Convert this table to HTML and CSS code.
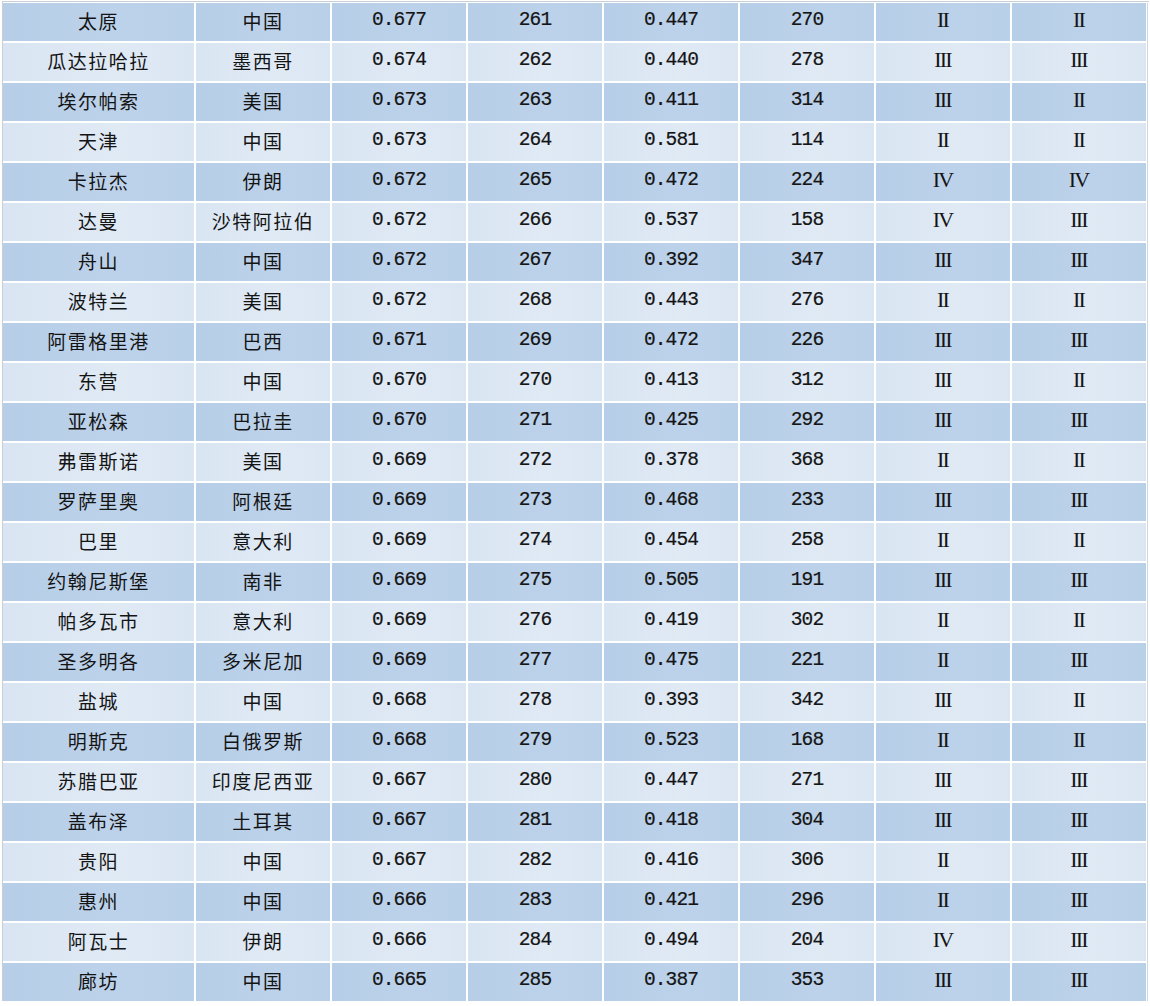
FILE: index.html
```html
<!DOCTYPE html>
<html lang="zh">
<head>
<meta charset="utf-8">
<link rel="stylesheet" href="styles.css">
</head>
<body>
<div class="frame">
<div class="grid" id="grid">
<div class="row dark"><span class="c zh">太原</span><span class="c zh">中国</span><span class="c num">0.677</span><span class="c num">261</span><span class="c num">0.447</span><span class="c num">270</span><span class="c rom">II</span><span class="c rom">II</span></div>
<div class="row light"><span class="c zh">瓜达拉哈拉</span><span class="c zh">墨西哥</span><span class="c num">0.674</span><span class="c num">262</span><span class="c num">0.440</span><span class="c num">278</span><span class="c rom">III</span><span class="c rom">III</span></div>
<div class="row dark"><span class="c zh">埃尔帕索</span><span class="c zh">美国</span><span class="c num">0.673</span><span class="c num">263</span><span class="c num">0.411</span><span class="c num">314</span><span class="c rom">III</span><span class="c rom">II</span></div>
<div class="row light"><span class="c zh">天津</span><span class="c zh">中国</span><span class="c num">0.673</span><span class="c num">264</span><span class="c num">0.581</span><span class="c num">114</span><span class="c rom">II</span><span class="c rom">II</span></div>
<div class="row dark"><span class="c zh">卡拉杰</span><span class="c zh">伊朗</span><span class="c num">0.672</span><span class="c num">265</span><span class="c num">0.472</span><span class="c num">224</span><span class="c rom">IV</span><span class="c rom">IV</span></div>
<div class="row light"><span class="c zh">达曼</span><span class="c zh">沙特阿拉伯</span><span class="c num">0.672</span><span class="c num">266</span><span class="c num">0.537</span><span class="c num">158</span><span class="c rom">IV</span><span class="c rom">III</span></div>
<div class="row dark"><span class="c zh">舟山</span><span class="c zh">中国</span><span class="c num">0.672</span><span class="c num">267</span><span class="c num">0.392</span><span class="c num">347</span><span class="c rom">III</span><span class="c rom">III</span></div>
<div class="row light"><span class="c zh">波特兰</span><span class="c zh">美国</span><span class="c num">0.672</span><span class="c num">268</span><span class="c num">0.443</span><span class="c num">276</span><span class="c rom">II</span><span class="c rom">II</span></div>
<div class="row dark"><span class="c zh">阿雷格里港</span><span class="c zh">巴西</span><span class="c num">0.671</span><span class="c num">269</span><span class="c num">0.472</span><span class="c num">226</span><span class="c rom">III</span><span class="c rom">III</span></div>
<div class="row light"><span class="c zh">东营</span><span class="c zh">中国</span><span class="c num">0.670</span><span class="c num">270</span><span class="c num">0.413</span><span class="c num">312</span><span class="c rom">III</span><span class="c rom">II</span></div>
<div class="row dark"><span class="c zh">亚松森</span><span class="c zh">巴拉圭</span><span class="c num">0.670</span><span class="c num">271</span><span class="c num">0.425</span><span class="c num">292</span><span class="c rom">III</span><span class="c rom">III</span></div>
<div class="row light"><span class="c zh">弗雷斯诺</span><span class="c zh">美国</span><span class="c num">0.669</span><span class="c num">272</span><span class="c num">0.378</span><span class="c num">368</span><span class="c rom">II</span><span class="c rom">II</span></div>
<div class="row dark"><span class="c zh">罗萨里奥</span><span class="c zh">阿根廷</span><span class="c num">0.669</span><span class="c num">273</span><span class="c num">0.468</span><span class="c num">233</span><span class="c rom">III</span><span class="c rom">III</span></div>
<div class="row light"><span class="c zh">巴里</span><span class="c zh">意大利</span><span class="c num">0.669</span><span class="c num">274</span><span class="c num">0.454</span><span class="c num">258</span><span class="c rom">II</span><span class="c rom">II</span></div>
<div class="row dark"><span class="c zh">约翰尼斯堡</span><span class="c zh">南非</span><span class="c num">0.669</span><span class="c num">275</span><span class="c num">0.505</span><span class="c num">191</span><span class="c rom">III</span><span class="c rom">III</span></div>
<div class="row light"><span class="c zh">帕多瓦市</span><span class="c zh">意大利</span><span class="c num">0.669</span><span class="c num">276</span><span class="c num">0.419</span><span class="c num">302</span><span class="c rom">II</span><span class="c rom">II</span></div>
<div class="row dark"><span class="c zh">圣多明各</span><span class="c zh">多米尼加</span><span class="c num">0.669</span><span class="c num">277</span><span class="c num">0.475</span><span class="c num">221</span><span class="c rom">II</span><span class="c rom">III</span></div>
<div class="row light"><span class="c zh">盐城</span><span class="c zh">中国</span><span class="c num">0.668</span><span class="c num">278</span><span class="c num">0.393</span><span class="c num">342</span><span class="c rom">III</span><span class="c rom">II</span></div>
<div class="row dark"><span class="c zh">明斯克</span><span class="c zh">白俄罗斯</span><span class="c num">0.668</span><span class="c num">279</span><span class="c num">0.523</span><span class="c num">168</span><span class="c rom">II</span><span class="c rom">II</span></div>
<div class="row light"><span class="c zh">苏腊巴亚</span><span class="c zh">印度尼西亚</span><span class="c num">0.667</span><span class="c num">280</span><span class="c num">0.447</span><span class="c num">271</span><span class="c rom">III</span><span class="c rom">III</span></div>
<div class="row dark"><span class="c zh">盖布泽</span><span class="c zh">土耳其</span><span class="c num">0.667</span><span class="c num">281</span><span class="c num">0.418</span><span class="c num">304</span><span class="c rom">III</span><span class="c rom">III</span></div>
<div class="row light"><span class="c zh">贵阳</span><span class="c zh">中国</span><span class="c num">0.667</span><span class="c num">282</span><span class="c num">0.416</span><span class="c num">306</span><span class="c rom">II</span><span class="c rom">III</span></div>
<div class="row dark"><span class="c zh">惠州</span><span class="c zh">中国</span><span class="c num">0.666</span><span class="c num">283</span><span class="c num">0.421</span><span class="c num">296</span><span class="c rom">II</span><span class="c rom">III</span></div>
<div class="row light"><span class="c zh">阿瓦士</span><span class="c zh">伊朗</span><span class="c num">0.666</span><span class="c num">284</span><span class="c num">0.494</span><span class="c num">204</span><span class="c rom">IV</span><span class="c rom">III</span></div>
<div class="row dark"><span class="c zh">廊坊</span><span class="c zh">中国</span><span class="c num">0.665</span><span class="c num">285</span><span class="c num">0.387</span><span class="c num">353</span><span class="c rom">III</span><span class="c rom">III</span></div>
</div>
</div>
</body>
</html>
```
FILE: styles.css
```css
html, body {
  margin: 0;
  padding: 0;
  background: #ffffff;
}
.frame {
  margin-top: 1px;
  margin-left: 2px;
  width: 1146px;
  border-top: 1px solid #c9ced6;
  border-left: 1px solid #c9ced6;
  padding-top: 1px;
}
.grid {
  display: flex;
  flex-direction: column;
  gap: 2px;
  width: 1144px;
  border-right: 1px solid #d3d8de;
}
.row {
  display: grid;
  grid-template-columns: 191px repeat(7, 134px);
  column-gap: 2px;
  height: 38px;
}
.c {
  display: flex;
  align-items: center;
  justify-content: center;
  padding-bottom: 4px;
  color: #141414;
  box-sizing: border-box;
}
.dark .c {
  background: linear-gradient(90deg, #b7cee8 0%, #bcd2ea 60%, #b9d0e9 100%);
}
.light .c {
  background: linear-gradient(90deg, #d9e5f2 0%, #e0eaf5 60%, #dbe6f3 100%);
}
.zh {
  font-family: "Noto Sans CJK SC", sans-serif;
  font-size: 19px;
  font-weight: 400;
  letter-spacing: 1.5px;
}
.num {
  font-family: "Liberation Mono", monospace;
  font-size: 19.5px;
  letter-spacing: -0.9px;
  -webkit-text-stroke: 0.2px #141414;
}
.rom {
  font-family: "Liberation Serif", serif;
  font-size: 22px;
  letter-spacing: -1.8px;
  padding-right: 1px;
}
```
